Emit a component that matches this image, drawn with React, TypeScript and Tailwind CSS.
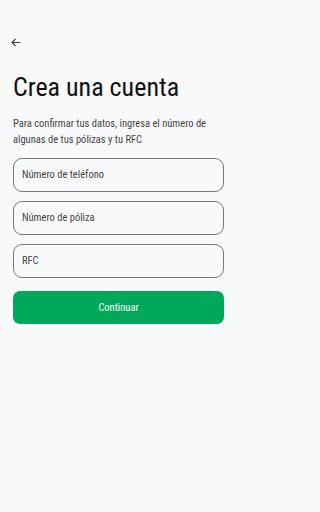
import React from 'react';

const fields = ['Número de teléfono', 'Número de póliza', 'RFC'];

export default function App() {
  return (
    <div className="min-h-screen w-full bg-[#f8f9fb]">
      <div
        className="min-h-[512px] w-[237px] px-[13px] pt-[36px] text-[#1a1a1a]"
        style={{ fontFamily: '"Liberation Sans Narrow", "Roboto Condensed", "DejaVu Sans Condensed", sans-serif' }}
      >
        <button className="-ml-[3px] flex h-[12px] w-[12px] items-center justify-center text-[#444]">
          <svg width="10" height="9" viewBox="0 0 10 9" fill="none" stroke="currentColor" strokeWidth="1.2">
            <path d="M9.5 4.5H1M4.5 1L1 4.5 4.5 8" />
          </svg>
        </button>

        <h1 className="mt-[22px] text-[26px] font-normal leading-[34px] text-[#111]">Crea una cuenta</h1>

        <p className="mt-[12px] text-[10.5px] leading-[16px] text-[#444]">
          Para confirmar tus datos, ingresa el número de algunas de tus pólizas y tu RFC
        </p>

        <div className="mt-[10px] flex flex-col gap-[9px]">
          {fields.map(f => (
            <div
              key={f}
              className="flex h-[34px] items-center rounded-[9px] border border-[#777] px-[8px] text-[10.5px] text-[#444]"
            >
              {f}
            </div>
          ))}
        </div>

        <button className="mt-[13px] flex h-[33px] w-full items-center justify-center rounded-[7px] bg-[#00a859] text-[10.5px] text-white">
          Continuar
        </button>
      </div>
    </div>
  );
}
